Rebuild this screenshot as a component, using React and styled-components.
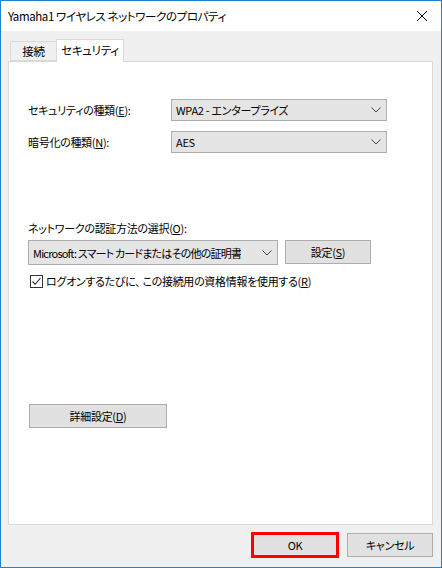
import styled, { createGlobalStyle } from "styled-components";

const GlobalStyle = createGlobalStyle`
    html, body {
        margin: 0;
        padding: 0;
        background: #ffffff;
    }
    * {
        box-sizing: border-box;
    }
`;

const FONT = `"Noto Sans CJK JP", "Noto Sans", "Liberation Sans", sans-serif`;

export default function App() {
    return (
        <>
            <GlobalStyle />
            <Window>
                <TitleBar>
                    <Title>Yamaha1 ワイヤレス ネットワークのプロパティ</Title>
                    <CloseButton>
                        <svg width="12" height="12" viewBox="0 0 12 12">
                            <path d="M1 1 L11 11 M11 1 L1 11" stroke="#000" strokeWidth="1" fill="none" />
                        </svg>
                    </CloseButton>
                </TitleBar>
                <Body>
                    <TabStrip>
                        <Tab>接続</Tab>
                        <Tab active>セキュリティ</Tab>
                    </TabStrip>
                    <Panel>
                        <FieldRow>
                            <Label>セキュリティの種類(<u>E</u>):</Label>
                            <Dropdown width={216} text="WPA2 - エンタープライズ" />
                        </FieldRow>
                        <FieldRow gap={10}>
                            <Label>暗号化の種類(<u>N</u>):</Label>
                            <Dropdown width={216} text="AES" />
                        </FieldRow>

                        <SectionLabel>ネットワークの認証方法の選択(<u>O</u>):</SectionLabel>
                        <AuthRow>
                            <Dropdown width={250} tall compact text="Microsoft: スマート カードまたはその他の証明書" />
                            <Button width={86}>設定(<u>S</u>)</Button>
                        </AuthRow>
                        <CheckRow>
                            <CheckBox>
                                <svg width="11" height="11" viewBox="0 0 11 11">
                                    <path d="M1.5 5.5 L4.2 8.3 L9.5 2" stroke="#222" strokeWidth="1.1" fill="none" />
                                </svg>
                            </CheckBox>
                            <span>ログオンするたびに、 この接続用の資格情報を使用する(<u>R</u>)</span>
                        </CheckRow>

                        <AdvancedRow>
                            <Button width={138}>詳細設定(<u>D</u>)</Button>
                        </AdvancedRow>
                    </Panel>
                    <Footer>
                        <Button width={88} focused>OK</Button>
                        <Button width={86}>キャンセル</Button>
                    </Footer>
                </Body>
            </Window>
        </>
    );
}

function Dropdown(props) {
    return (
        <SelectBox width={props.width} tall={props.tall}>
            <SelectText compact={props.compact}>{props.text}</SelectText>
            <svg width="10" height="6" viewBox="0 0 10 6">
                <path d="M0.5 0.5 L5 5 L9.5 0.5" stroke="#444" strokeWidth="1" fill="none" />
            </svg>
        </SelectBox>
    );
}

const Window = styled.div`
    width: 442px;
    height: 568px;
    border: 1px solid #1883d7;
    display: flex;
    flex-direction: column;
    font-family: ${FONT};
    font-size: 11px;
    letter-spacing: -0.3px;
    font-feature-settings: "palt";
    color: #000;
    background: #f0f0f0;
`;

const TitleBar = styled.div`
    height: 30px;
    background: #ffffff;
    display: flex;
    align-items: center;
    justify-content: space-between;
    padding-left: 7px;
    padding-right: 9px;
    flex-shrink: 0;
`;

const Title = styled.span`
    font-size: 11.5px;
    letter-spacing: -0.4px;
`;

const CloseButton = styled.div`
    width: 20px;
    height: 20px;
    display: flex;
    align-items: center;
    justify-content: center;
`;

const Body = styled.div`
    flex: 1;
    display: flex;
    flex-direction: column;
    padding: 8px 8px 0 7px;
`;

const TabStrip = styled.div`
    display: flex;
    align-items: flex-end;
    padding-left: 2px;
    height: 22px;
    position: relative;
    z-index: 1;
`;

const Tab = styled.div`
    height: ${props => props.active ? "23px" : "20px"};
    padding-bottom: ${props => props.active ? "2px" : "0"};
    margin-bottom: ${props => props.active ? "-1px" : "0"};
    background: ${props => props.active ? "#ffffff" : "#f0f0f0"};
    border: 1px solid #d9d9d9;
    border-bottom: ${props => props.active ? "none" : "1px solid #d9d9d9"};
    margin-left: ${props => props.active ? "-1px" : "0"};
    display: flex;
    align-items: center;
    justify-content: center;
    white-space: nowrap;
    font-size: 11.5px;
    width: ${props => props.active ? "68px" : "47px"};
`;

const Panel = styled.div`
    width: 425px;
    height: 464px;
    background: #ffffff;
    border: 1px solid #d9d9d9;
    padding: 37px 0 0 19px;
    display: flex;
    flex-direction: column;
`;

const FieldRow = styled.div`
    display: flex;
    align-items: center;
    margin-top: ${props => props.gap || 0}px;
`;

const Label = styled.span`
    width: 143px;
`;

const SelectBox = styled.div`
    width: ${props => props.width}px;
    height: ${props => props.tall ? "25px" : "22px"};
    background: #e5e5e5;
    border: 1px solid #adadad;
    display: flex;
    align-items: center;
    justify-content: space-between;
    gap: 4px;
    padding: 0 5px 0 4px;
`;

const SelectText = styled.span`
    white-space: nowrap;
    overflow: hidden;
    letter-spacing: ${props => props.compact ? "-0.8px" : "-0.3px"};
`;

const SectionLabel = styled.div`
    margin-top: 66px;
    height: 18px;
    line-height: 18px;
`;

const AuthRow = styled.div`
    display: flex;
    gap: 7px;
    margin-top: 3px;
`;

const Button = styled.div`
    width: ${props => props.width}px;
    height: ${props => props.focused ? "26px" : "24px"};
    background: #e1e1e1;
    border: ${props => props.focused ? "3px solid #ff0000" : "1px solid #adadad"};
    display: flex;
    align-items: center;
    justify-content: center;
`;

const CheckRow = styled.div`
    display: flex;
    align-items: center;
    gap: 3px;
    margin-top: 8px;
    margin-left: 2px;
`;

const CheckBox = styled.div`
    width: 13px;
    height: 13px;
    border: 1px solid #333;
    background: #fff;
    display: flex;
    align-items: center;
    justify-content: center;
`;

const AdvancedRow = styled.div`
    margin-top: 115px;
    margin-left: 1px;
`;

const Footer = styled.div`
    display: flex;
    justify-content: flex-end;
    align-items: center;
    gap: 8px;
    margin-top: 7px;
`;
